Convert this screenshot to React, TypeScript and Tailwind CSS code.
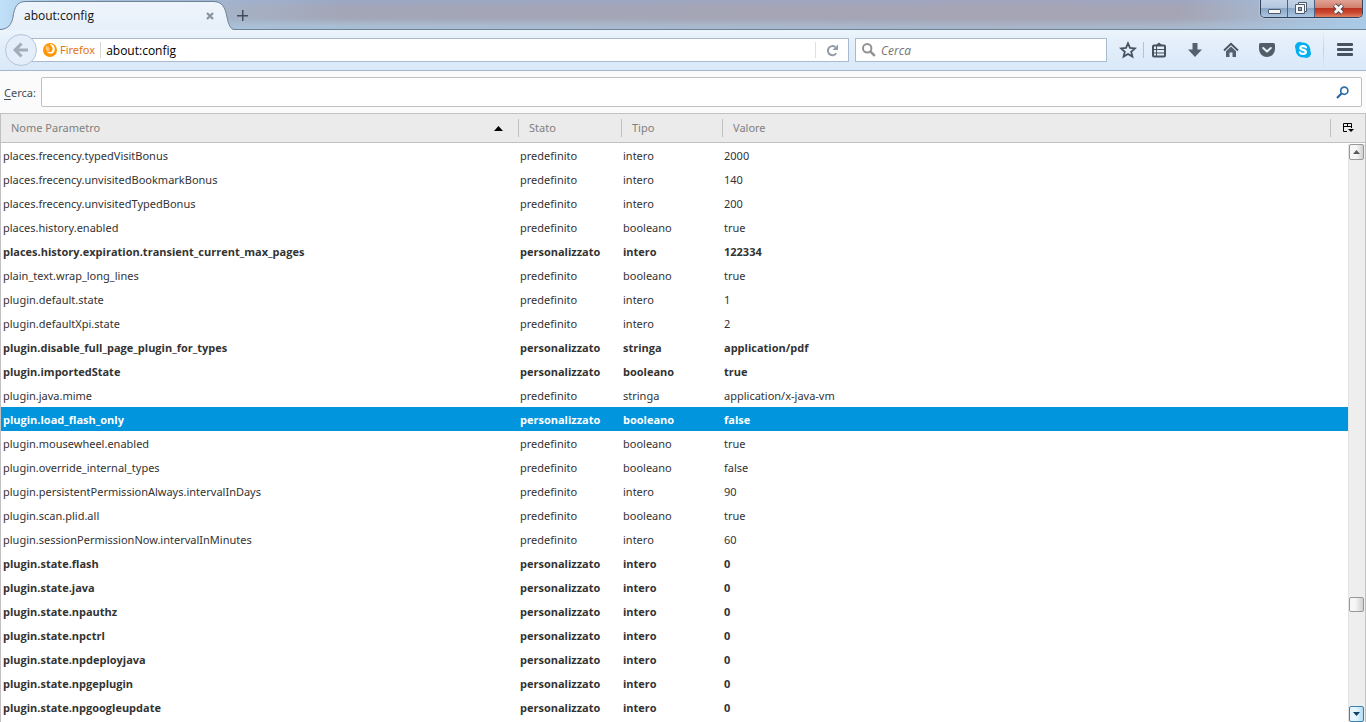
import React from "react";

type Pref = { name: string; type: string; value: string; custom?: boolean; selected?: boolean };

const prefs: Pref[] = [
  { name: "places.frecency.typedVisitBonus", type: "intero", value: "2000" },
  { name: "places.frecency.unvisitedBookmarkBonus", type: "intero", value: "140" },
  { name: "places.frecency.unvisitedTypedBonus", type: "intero", value: "200" },
  { name: "places.history.enabled", type: "booleano", value: "true" },
  { name: "places.history.expiration.transient_current_max_pages", type: "intero", value: "122334", custom: true },
  { name: "plain_text.wrap_long_lines", type: "booleano", value: "true" },
  { name: "plugin.default.state", type: "intero", value: "1" },
  { name: "plugin.defaultXpi.state", type: "intero", value: "2" },
  { name: "plugin.disable_full_page_plugin_for_types", type: "stringa", value: "application/pdf", custom: true },
  { name: "plugin.importedState", type: "booleano", value: "true", custom: true },
  { name: "plugin.java.mime", type: "stringa", value: "application/x-java-vm" },
  { name: "plugin.load_flash_only", type: "booleano", value: "false", custom: true, selected: true },
  { name: "plugin.mousewheel.enabled", type: "booleano", value: "true" },
  { name: "plugin.override_internal_types", type: "booleano", value: "false" },
  { name: "plugin.persistentPermissionAlways.intervalInDays", type: "intero", value: "90" },
  { name: "plugin.scan.plid.all", type: "booleano", value: "true" },
  { name: "plugin.sessionPermissionNow.intervalInMinutes", type: "intero", value: "60" },
  { name: "plugin.state.flash", type: "intero", value: "0", custom: true },
  { name: "plugin.state.java", type: "intero", value: "0", custom: true },
  { name: "plugin.state.npauthz", type: "intero", value: "0", custom: true },
  { name: "plugin.state.npctrl", type: "intero", value: "0", custom: true },
  { name: "plugin.state.npdeployjava", type: "intero", value: "0", custom: true },
  { name: "plugin.state.npgeplugin", type: "intero", value: "0", custom: true },
  { name: "plugin.state.npgoogleupdate", type: "intero", value: "0", custom: true },
];

function TitleBar() {
  return (
    <header className="relative flex h-[30px] shrink-0 items-start bg-[linear-gradient(to_bottom,#9ba8c6_0%,#a4a6b8_25%,#a3a6b7_60%,#a9bdd2_85%,#a9c0d8_100%)]">
      <div className="absolute inset-0 bg-[linear-gradient(to_right,#bfe0f8_0px,#a9c4de_60px,#a9c4de00_340px,#a8a0ae55_1000px,#a8a0ae44_1180px,#a9cbe8_1366px)]" />
      <div className="absolute inset-x-0 bottom-0 h-px bg-[#6d8396]" />
      <div className="relative flex h-[30px] w-[234px] items-center">
        <svg className="absolute inset-0" width="234" height="30" viewBox="0 0 234 30" fill="none" aria-hidden="true">
          <defs>
            <linearGradient id="tab" x1="0" y1="0" x2="0" y2="1">
              <stop offset="0" stopColor="#eef4fb" />
              <stop offset="1" stopColor="#e6f0fa" />
            </linearGradient>
          </defs>
          <path d="M0 29.5C8 29 11.500 25 13 17C14.500 7 17 1.500 26 1.500H213C222 1.500 225 7 227 17C228.500 25 231 29.500 234 29.500V30H0Z" fill="url(#tab)" />
          <path d="M0 29.5C8 29 11.500 25 13 17C14.500 7 17 1.500 26 1.500H213C222 1.500 225 7 227 17C228.500 25 231 29.500 234 29.500" stroke="#6d8396" />
        </svg>
        <span className="relative ml-6 mt-[2px] flex-1 text-[12px] leading-4 text-[#101010]">about:config</span>
        <button type="button" aria-label="Chiudi scheda" className="relative mr-5 mt-[2px] flex h-3 w-2 items-center justify-center">
          <svg width="8" height="8" viewBox="0 0 8 8" aria-hidden="true">
            <path d="M1 1L7 7M7 1L1 7" stroke="#87939f" strokeWidth="2.200" />
          </svg>
        </button>
      </div>
      <button type="button" aria-label="Nuova scheda" className="relative ml-[3px] mt-[10px] flex h-[11px] w-[11px] items-center justify-center">
        <svg width="11" height="11" viewBox="0 0 11 11" aria-hidden="true">
          <path d="M5 0H6.500V11H5ZM0 5H11V6.500H0Z" fill="#3f4f5d" />
        </svg>
      </button>
      <div className="relative ml-auto mr-[3px] flex h-[18px] overflow-hidden rounded-b-[5px] border border-t-0 border-[#33435a] shadow-[0_0_2px_#dfeaf5]">
        <button type="button" aria-label="Riduci a icona" className="flex w-[27px] items-center justify-center border-r border-[#4c6180] bg-[linear-gradient(#c3d3e6_0%,#b3c7de_45%,#8ba6c6_50%,#a9c6e2_100%)]">
          <svg width="13" height="16" viewBox="0 0 13 16" aria-hidden="true">
            <rect x="0.500" y="8.500" width="12" height="4" rx="0.500" fill="#f6f6f6" stroke="#4d5a6b" />
          </svg>
        </button>
        <button type="button" aria-label="Ripristina" className="flex w-[27px] items-center justify-center border-r border-[#4c6180] bg-[linear-gradient(#c3d3e6_0%,#b3c7de_45%,#8ba6c6_50%,#a9c6e2_100%)]">
          <svg width="12" height="13" viewBox="0 0 12 13" aria-hidden="true">
            <path d="M3.500 0.500H11.500V9.500H9.500V11.500H0.500V2.500H3.500Z" fill="#f6f6f6" stroke="#4d5a6b" />
            <path d="M3.500 2.500H9.500V9.500" fill="none" stroke="#4d5a6b" />
            <rect x="3.500" y="5.500" width="3" height="3" fill="#8fa4bc" stroke="#4d5a6b" />
          </svg>
        </button>
        <button type="button" aria-label="Chiudi" className="flex w-[47px] items-center justify-center bg-[linear-gradient(#e0a394_0%,#d27f6c_45%,#bb3320_50%,#cc4a30_75%,#e08362_100%)]">
          <svg width="13" height="12" viewBox="0 0 13 12" aria-hidden="true">
            <path d="M2.500 2L10.500 10M10.500 2L2.500 10" stroke="#5b4350" strokeWidth="4.600" />
            <path d="M2.800 2.300L10.200 9.700M10.200 2.300L2.800 9.700" stroke="#f6f6f6" strokeWidth="2.800" />
          </svg>
        </button>
      </div>
    </header>
  );
}

function ToolButton({ label, children }: { label: string; children: React.ReactNode }) {
  return (
    <button type="button" aria-label={label} className="flex h-[26px] w-[26px] shrink-0 items-center justify-center">
      {children}
    </button>
  );
}

function NavBar() {
  return (
    <nav className="flex h-[41px] shrink-0 items-center border-b border-[#a3b7cf] bg-[linear-gradient(#ecf4fb,#e4effa_30%,#dae8f8)]">
      <button type="button" aria-label="Indietro" className="relative z-10 ml-[5px] flex h-8 w-8 shrink-0 items-center justify-center rounded-full border border-[#b4c5d8] bg-[#e3eefa]">
        <svg width="16" height="16" viewBox="0 0 16 16" fill="none" aria-hidden="true">
          <path d="M8.500 1.500L2.200 8L8.500 14.500M2.500 8H15" stroke="#a3adb8" strokeWidth="3.200" />
        </svg>
      </button>
      <div className="-ml-2 flex h-6 flex-1 items-center border border-[#a8bad0] bg-white pl-[13px]">
        <svg width="14" height="14" viewBox="0 0 14 14" className="shrink-0" aria-hidden="true">
          <circle cx="7" cy="7" r="7" fill="#ff9500" />
          <path d="M6.500 1.600C8 1 9.800 1.500 10.900 2.900C12.600 5.300 12 8.800 9.600 10.200C7.200 11.400 4.300 10.300 3.400 8C4.500 9.300 6.400 9.600 7.700 8.900C9.500 8 10 5.900 9.300 4.400C8.800 3.200 7.800 2.300 6.500 1.600Z" fill="#fff" />
          <path d="M3.300 2.200L4.300 3.500C5 3.300 5.700 3.400 6.200 3.700C5.700 4.200 5.600 4.700 5.700 5.200L7.300 5.500C7 6.300 6.200 6.500 5.700 6.800C5.700 7.600 6.500 7.900 7.400 7.600C6.200 9 3.900 8.400 3.100 6.800C2.500 5.300 2.700 3.600 3.300 2.200Z" fill="#ffc980" />
        </svg>
        <span className="ml-[3px] font-['Noto_Sans',sans-serif] text-[11px] leading-4 text-[#e27510]">Firefox</span>
        <span className="mx-[5px] h-4 w-px bg-[#d8d8d8]" />
        <input aria-label="Indirizzo" defaultValue="about:config" className="h-5 min-w-0 flex-1 bg-transparent text-[12px] leading-4 text-black outline-none" />
        <span className="h-4 w-px bg-[#dcdfe3]" />
        <button type="button" aria-label="Ricarica" className="flex h-5 w-8 items-center justify-center">
          <svg width="13" height="13" viewBox="0 0 13 13" fill="none" aria-hidden="true">
            <path d="M10.300 9.300A4.600 4.600 0 1 1 9.300 3" stroke="#929ca7" strokeWidth="2" />
            <path d="M12 0.500V6H6.500Z" fill="#929ca7" />
          </svg>
        </button>
      </div>
      <div className="ml-[6px] flex h-6 w-[252px] items-center border border-[#a8bad0] bg-white pl-[6px]">
        <svg width="14" height="14" viewBox="0 0 14 14" fill="none" aria-hidden="true">
          <circle cx="5.200" cy="5.200" r="4.200" stroke="#929292" strokeWidth="2" />
          <path d="M8.300 8.300L12.800 12.800" stroke="#929292" strokeWidth="2.600" />
        </svg>
        <input aria-label="Cerca nel Web" placeholder="Cerca" className="ml-[5px] h-5 min-w-0 flex-1 bg-transparent text-[12px] leading-4 italic outline-none placeholder:text-[#737373]" />
      </div>
      <div className="ml-2 flex items-center">
        <ToolButton label="Aggiungi ai segnalibri">
          <svg width="18" height="18" viewBox="0 0 18 18" fill="none" aria-hidden="true">
            <path d="M9 2.300L11 6.900L16 7.400L12.200 10.700L13.400 15.600L9 13L4.600 15.600L5.800 10.700L2 7.400L7 6.900Z" stroke="#46525e" strokeWidth="1.800" />
          </svg>
        </ToolButton>
        <span className="mx-[2px] h-4 w-px bg-[#b4c3d3]" />
        <div className="flex gap-[10px]">
          <ToolButton label="Segnalibri">
            <svg width="16" height="16" viewBox="0 0 16 16" fill="none" aria-hidden="true">
              <path d="M5 3L8 0.500L11 3Z" fill="#46525e" />
              <rect x="2" y="3.500" width="12" height="11" rx="1" stroke="#46525e" strokeWidth="2" />
              <path d="M3 7.500H13M3 11H13M3 3.500H13" stroke="#46525e" strokeWidth="1.200" />
              <path d="M5.500 4V14" stroke="#46525e" />
            </svg>
          </ToolButton>
          <ToolButton label="Download">
            <svg width="16" height="16" viewBox="0 0 16 16" fill="#55616d" aria-hidden="true">
              <path d="M5.500 1H10.500V7.500H15L8 15L1 7.500H5.500Z" />
            </svg>
          </ToolButton>
          <ToolButton label="Pagina iniziale">
            <svg width="16" height="16" viewBox="0 0 16 16" fill="none" aria-hidden="true">
              <path d="M1 8.500L8 1.800L15 8.500" stroke="#46525e" strokeWidth="1.800" />
              <path d="M3 9.200L8 4.600L13 9.200V15H9.500V10.500H6.500V15H3Z" fill="#55616d" />
            </svg>
          </ToolButton>
          <ToolButton label="Pocket">
            <svg width="16" height="16" viewBox="0 0 16 16" fill="none" aria-hidden="true">
              <path d="M1.500 1H14.500Q16 1 16 2.500V7A8 8 0 0 1 0 7V2.500Q0 1 1.500 1Z" fill="#515d69" />
              <path d="M4.200 6L8 9.600L11.800 6" stroke="#e8f1fa" strokeWidth="2" strokeLinecap="round" strokeLinejoin="round" />
            </svg>
          </ToolButton>
          <ToolButton label="Skype">
            <svg width="16" height="16" viewBox="0 0 16 16" fill="none" aria-hidden="true">
              <circle cx="8" cy="8" r="7.400" fill="#00aff0" />
              <circle cx="4.700" cy="4.700" r="4.700" fill="#00aff0" />
              <circle cx="11.300" cy="11.300" r="4.700" fill="#00aff0" />
              <path d="M11 5.400C10.300 3.900 5.400 3.500 5.300 6C5.300 8.400 10.900 7.400 10.900 10C10.800 12.500 5.600 12.400 4.900 10.300" stroke="#fff" strokeWidth="2.200" strokeLinecap="round" />
            </svg>
          </ToolButton>
        </div>
        <span className="ml-[7px] h-10 w-px bg-[linear-gradient(#c3d2e200,#c3d2e2_50%,#c3d2e200)]" />
        <button type="button" aria-label="Apri menu" className="flex h-8 w-[42px] items-center justify-center">
          <svg width="16" height="14" viewBox="0 0 16 14" fill="#46525e" aria-hidden="true">
            <rect y="0" width="16" height="3" rx="1" />
            <rect y="5" width="16" height="3" rx="1" />
            <rect y="10" width="16" height="3" rx="1" />
          </svg>
        </button>
      </div>
    </nav>
  );
}

function FilterBar() {
  return (
    <div className="flex h-[42px] shrink-0 items-center bg-[#fbfbfb] pl-1 pr-1">
      <label htmlFor="filter" className="w-[37px] pt-[2px] font-['Noto_Sans',sans-serif] text-[11px] leading-4 text-[#424f5a]">
        <span className="underline underline-offset-2">C</span>erca:
      </label>
      <div className="flex h-[30px] flex-1 items-center rounded-[2px] border border-[#c1c1c1] bg-white pl-2 pr-3">
        <input id="filter" className="h-7 min-w-0 flex-1 bg-transparent text-[11px] text-[#333] outline-none" />
        <svg width="13" height="13" viewBox="0 0 13 13" fill="none" aria-hidden="true">
          <circle cx="8.300" cy="4.700" r="3.600" stroke="#2f72a8" strokeWidth="1.700" />
          <path d="M5.500 7.500L1 12" stroke="#2f62a0" strokeWidth="2.200" />
        </svg>
      </div>
    </div>
  );
}

function Heading({ children, first }: { children: React.ReactNode; first?: boolean }) {
  return (
    <th scope="col" className="border-b border-[#c1c1c1] p-0 text-left font-normal">
      <div className={first ? "flex h-[18px] items-center pl-[10px] pr-[15px]" : "flex h-[18px] items-center border-l border-[#c1c1c1] pl-[10px]"}>
        {children}
      </div>
    </th>
  );
}

function ScrollBar() {
  return (
    <div className="absolute bottom-0 right-0 top-[30px] flex w-[17px] flex-col border-l border-[#e3e3e3] bg-[#eeeeee] pr-px">
      <button type="button" aria-label="Scorri in alto" className="flex h-4 items-center justify-center rounded-[2px] border border-[#989898] bg-[linear-gradient(to_right,#f6f6f6_50%,#cfcfd2)]">
        <svg width="7" height="4" viewBox="0 0 7 4" aria-hidden="true">
          <path d="M0 4L3.500 0L7 4Z" fill="#5a5a5a" />
        </svg>
      </button>
      <div className="flex-[438]" />
      <div className="h-[15px] rounded-[2px] border border-[#989898] bg-[linear-gradient(to_right,#f6f6f6_40%,#d0d0d3)]" />
      <div className="flex-[94]" />
      <button type="button" aria-label="Scorri in basso" className="flex h-4 items-center justify-center rounded-[2px] border border-[#3c7fb1] bg-[linear-gradient(to_right,#e6f5fd_45%,#b0dcf4)]">
        <svg width="7" height="4" viewBox="0 0 7 4" aria-hidden="true">
          <path d="M0 0L3.500 4L7 0Z" fill="#12405f" />
        </svg>
      </button>
    </div>
  );
}

function PrefTable() {
  return (
    <main className="relative min-h-0 flex-1 overflow-hidden border border-b-0 border-[#c1c1c1] bg-white">
      <table className="w-full table-fixed border-separate border-spacing-0 font-['Noto_Sans',sans-serif] text-[11px] leading-4 text-[#333]">
        <colgroup>
          <col className="w-[517px]" />
          <col className="w-[103px]" />
          <col className="w-[101px]" />
          <col />
          <col className="w-[18px]" />
          <col className="w-[17px]" />
        </colgroup>
        <thead>
          <tr className="h-[29px] bg-[#ebebeb] text-[#808080]">
            <Heading first>
              <span className="flex-1">Nome Parametro</span>
              <svg width="9" height="5" viewBox="0 0 9 5" aria-hidden="true">
                <path d="M0 5L4.500 0L9 5Z" fill="#000" />
              </svg>
            </Heading>
            <Heading>Stato</Heading>
            <Heading>Tipo</Heading>
            <Heading>Valore</Heading>
            <th colSpan={2} className="border-b border-[#c1c1c1] p-0">
              <button type="button" aria-label="Seleziona colonne" className="flex h-[18px] w-full items-center justify-center border-l border-[#c1c1c1]">
                <svg width="11" height="10" viewBox="0 0 11 10" fill="none" aria-hidden="true">
                  <path d="M4 8.500H0.500V0.500H8.500V5M0.500 3.500H8.500M4.500 0.500V3.500" stroke="#000" />
                  <path d="M5 6H11L8 9Z" fill="#000" />
                </svg>
              </button>
            </th>
          </tr>
        </thead>
        <tbody>
          {prefs.map((p) => {
            const cell = p.selected ? "bg-[#0095dd] pb-0 pl-[2px] pr-0 pt-[2px]" : "pb-0 pl-[2px] pr-0 pt-[2px]";
            return (
              <tr
                key={p.name}
                className={
                  p.selected
                    ? "h-6 font-['Open_Sans',sans-serif] font-bold text-white"
                    : p.custom
                      ? "h-6 font-['Open_Sans',sans-serif] font-bold"
                      : "h-6"
                }
              >
                <td className={cell}>{p.name}</td>
                <td className={cell}>{p.custom ? "personalizzato" : "predefinito"}</td>
                <td className={cell}>{p.type}</td>
                <td className={cell} colSpan={2}>{p.value}</td>
                <td className="p-0" />
              </tr>
            );
          })}
        </tbody>
      </table>
      <ScrollBar />
    </main>
  );
}

export default function App() {
  return (
    <div className="flex h-screen flex-col overflow-hidden bg-[#fbfbfb] font-['Open_Sans','Noto_Sans',sans-serif]">
      <TitleBar />
      <NavBar />
      <FilterBar />
      <PrefTable />
    </div>
  );
}
